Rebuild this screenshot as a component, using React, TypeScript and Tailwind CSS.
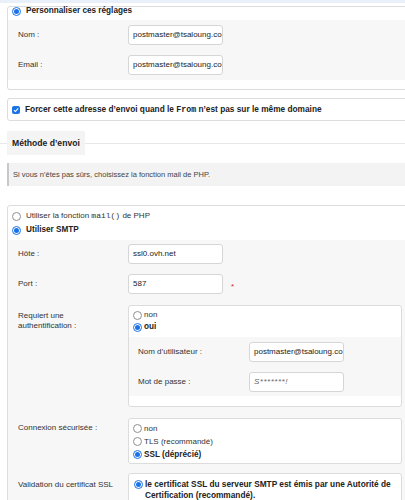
import React from 'react';

function Radio({ checked }: { checked?: boolean }) {
  return (
    <span
      className={`inline-flex w-[9px] h-[9px] shrink-0 items-center justify-center rounded-full border bg-white ${
        checked ? 'border-[#1a73e8]' : 'border-[#8f8f8f]'
      }`}
    >
      {checked && <span className="w-[5px] h-[5px] rounded-full bg-[#1a73e8]" />}
    </span>
  );
}

function Field({ value, italic }: { value: string; italic?: boolean }) {
  return (
    <div
      className={`w-[95px] h-[20px] shrink-0 flex items-center overflow-hidden whitespace-nowrap rounded-[3px] border border-[#d6d6d6] bg-white px-[4px] text-[8px] ${
        italic ? 'italic text-[#666] tracking-[0.5px]' : 'text-[#222]'
      }`}
    >
      {value}
    </div>
  );
}

function Row({ label, children, top }: { label: React.ReactNode; children: React.ReactNode; top?: string }) {
  return (
    <div className={`flex ${top ? 'items-start' : 'items-center'}`}>
      <div className={`w-[110px] shrink-0 text-[8px] leading-[10px] text-[#333] ${top ?? ''}`}>{label}</div>
      {children}
    </div>
  );
}

export default function App() {
  return (
    <div className="w-[405px] h-[500px] overflow-hidden bg-white font-['Liberation_Sans',Arial,sans-serif] leading-[10px] text-[#222]">
      <div className="h-[3px] bg-[#e9f0fa]" />

      {/* Personnaliser */}
      <div className="mt-[3px] ml-[7px] w-[420px] rounded-[3px] border border-[#dcdcdc] pb-[9px]">
        <div className="flex h-[8px] items-center gap-[5px] pl-[4px] mb-[5px]">
          <Radio checked />
          <span className="text-[8.2px] font-bold">Personnaliser ces réglages</span>
        </div>
        <div className="flex flex-col gap-[10px] bg-[#f7f7f7] pl-[10px] pt-[5px] pb-[5px]">
          <Row label="Nom :">
            <Field value="postmaster@tsaloung.co" />
          </Row>
          <Row label="Email :">
            <Field value="postmaster@tsaloung.co" />
          </Row>
        </div>
      </div>

      {/* Forcer */}
      <div className="mt-[8px] ml-[7px] w-[420px] h-[23px] flex items-center gap-[5px] rounded-[3px] border border-[#dcdcdc] pl-[4px]">
        <span className="w-[8px] h-[8px] rounded-[2px] bg-[#1a73e8] flex items-center justify-center">
          <svg width="6" height="6" viewBox="0 0 10 10">
            <path d="M1.5 5.2 L4 7.6 L8.6 2.4" fill="none" stroke="white" strokeWidth="1.8" />
          </svg>
        </span>
        <span className="text-[8.3px] font-bold">
          Forcer cette adresse d’envoi quand le <span className="font-['Liberation_Mono',monospace]">From</span> n’est pas sur le même domaine
        </span>
      </div>

      {/* Méthode d'envoi */}
      <div className="mt-[10px] flex items-center">
        <div className="w-[7px] h-px bg-[#e8e8e8]" />
        <div className="h-[24px] flex items-center bg-[#f4f4f4] px-[5px] text-[8.6px] font-bold">Méthode d’envoi</div>
        <div className="flex-1 h-px bg-[#e8e8e8]" />
      </div>

      <div className="mt-[8px] ml-[7px] h-[23px] flex items-center border-l-2 border-[#c9c9c9] bg-[#f3f3f3] pl-[4px] text-[7.5px] text-[#444]">
        Si vous n’êtes pas sûrs, choisissez la fonction mail de PHP.
      </div>

      {/* SMTP */}
      <div className="mt-[19px] ml-[7px] w-[420px] rounded-[3px] border border-[#dcdcdc]">
        <div className="pt-[3px] pb-[3px] pl-[4px]">
          <div className="flex h-[14px] items-center gap-[5px] text-[8px] text-[#333]">
            <Radio />
            <span>
              Utiliser la fonction <span className="font-['Liberation_Mono',monospace]">mail()</span> de PHP
            </span>
          </div>
          <div className="flex h-[14px] items-center gap-[5px]">
            <Radio checked />
            <span className="text-[8.2px] font-bold">Utiliser SMTP</span>
          </div>
        </div>
        <div className="flex flex-col bg-[#f7f7f7] pl-[10px] pt-[4px] pb-[20px]">
          <Row label="Hôte :">
            <Field value="ssl0.ovh.net" />
          </Row>
          <div className="mt-[10px]">
            <Row label="Port :">
              <Field value="587" />
              <span className="ml-[8px] mt-[6px] text-[8px] text-[#e02020]">*</span>
            </Row>
          </div>
          <div className="mt-[11px]">
            <Row label={<>Requiert une<br />authentification :</>} top="pt-[6px]">
              <div className="w-[274px] h-[102px] rounded-[3px] border border-[#dcdcdc] bg-white">
                <div className="pt-[3px] pl-[4px]">
                  <div className="flex h-[12px] items-center gap-[2px] text-[8px] text-[#333]">
                    <Radio />
                    <span>non</span>
                  </div>
                  <div className="flex h-[12px] items-center gap-[2px]">
                    <Radio checked />
                    <span className="text-[8.2px] font-bold">oui</span>
                  </div>
                </div>
                <div className="mt-[4px] flex flex-col gap-[10px] bg-[#f7f7f7] pl-[9px] pt-[5px] pb-[4px]">
                  <div className="flex items-center">
                    <div className="w-[111px] text-[8px] text-[#333]">Nom d’utilisateur :</div>
                    <Field value="postmaster@tsaloung.co" />
                  </div>
                  <div className="flex items-center">
                    <div className="w-[111px] text-[8px] text-[#333]">Mot de passe :</div>
                    <Field value="S*******!" italic />
                  </div>
                </div>
              </div>
            </Row>
          </div>
          <div className="mt-[11px]">
            <Row label="Connexion sécurisée :" top="pt-[5px]">
              <div className="w-[274px] rounded-[3px] border border-[#dcdcdc] bg-white pl-[4px] pt-[3px] pb-[2px]">
                <div className="flex h-[13px] items-center gap-[2px] text-[8px] text-[#333]">
                  <Radio />
                  <span>non</span>
                </div>
                <div className="flex h-[13px] items-center gap-[2px] text-[8px] text-[#333]">
                  <Radio />
                  <span>TLS (recommandé)</span>
                </div>
                <div className="flex h-[13px] items-center gap-[2px]">
                  <Radio checked />
                  <span className="text-[8.2px] font-bold">SSL (déprécié)</span>
                </div>
              </div>
            </Row>
          </div>
          <div className="mt-[9px]">
            <Row label="Validation du certificat SSL" top="pt-[7px]">
              <div className="w-[274px] rounded-[3px] border border-[#dcdcdc] bg-white pl-[5px] pr-[8px] pt-[5px] pb-[4px]">
                <div className="flex items-start gap-[2px]">
                  <div className="flex h-[11px] items-center">
                    <Radio checked />
                  </div>
                  <span className="text-[8.3px] font-bold leading-[11px]">
                    le certificat SSL du serveur SMTP est émis par une Autorité de Certification (recommandé).
                  </span>
                </div>
              </div>
            </Row>
          </div>
        </div>
      </div>
    </div>
  );
}
